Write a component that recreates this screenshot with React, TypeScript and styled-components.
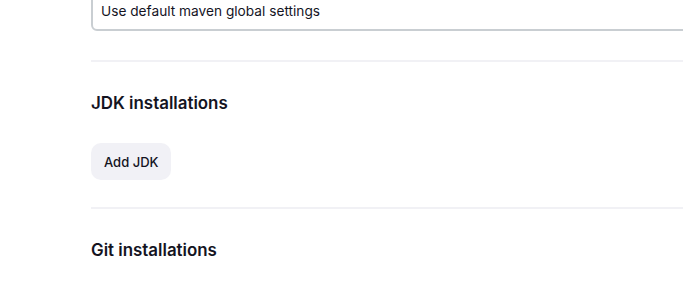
import React from 'react'
import styled, { createGlobalStyle } from 'styled-components'

const GlobalStyle = createGlobalStyle`
  html, body {
    margin: 0;
    padding: 0;
    background: #ffffff;
    overflow: hidden;
  }
  body {
    font-family: Inter, "Noto Sans", "Liberation Sans", sans-serif;
    color: #14141f;
  }
`

const Page = styled.div`
  padding-left: 91px;
  margin-top: -10px;
  margin-right: -40px;
`

const SelectBox = styled.div`
  height: 41px;
  box-sizing: border-box;
  border: 2px solid #c9ced2;
  border-radius: 6px;
  padding: 0 8px;
  display: flex;
  align-items: center;
  font-size: 13.7px;
  color: #14141f;
  margin-bottom: 29px;
`

const Section = styled.section`
  border-top: 2px solid #f1f1f5;
  padding-top: 29px;
  padding-bottom: 27px;
`

const Heading = styled.h2`
  margin: 0;
  font-size: 16.9px;
  line-height: 24px;
  font-weight: 600;
  color: #14141f;
`

const AddButton = styled.button`
  margin-top: 28px;
  height: 37px;
  padding: 0 13px;
  border: none;
  border-radius: 10px;
  background: #f1f1f6;
  color: #14141f;
  font-family: inherit;
  font-size: 13px;
  font-weight: 500;
  cursor: pointer;
  display: block;

  &:hover {
    background: #e8e8ef;
  }
`

const App: React.FC = () => {
  return (
    <>
      <GlobalStyle />
      <Page>
        <SelectBox>Use default maven global settings</SelectBox>
        <Section>
          <Heading>JDK installations</Heading>
          <AddButton>Add JDK</AddButton>
        </Section>
        <Section>
          <Heading>Git installations</Heading>
        </Section>
      </Page>
    </>
  )
}

export default App
